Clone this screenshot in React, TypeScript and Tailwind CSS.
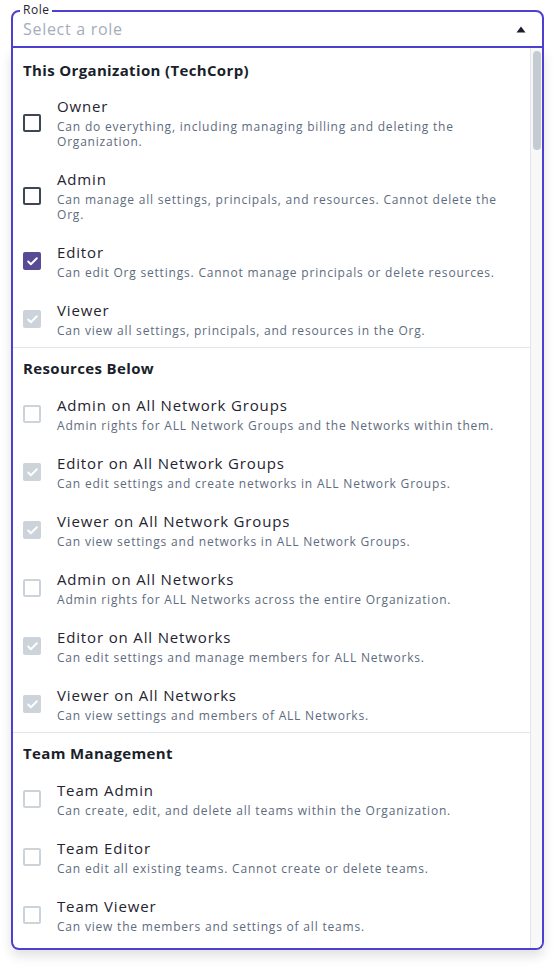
import { Check } from "lucide-react";

type Role = {
    label: string;
    desc: string;
    state: 'off' | 'on' | 'lockedOn' | 'lockedOff';
};

const sections: { title: string; roles: Role[] }[] = [
    {
        title: 'This Organization (TechCorp)',
        roles: [
            { label: 'Owner', desc: 'Can do everything, including managing billing and deleting the Organization.', state: 'off' },
            { label: 'Admin', desc: 'Can manage all settings, principals, and resources. Cannot delete the Org.', state: 'off' },
            { label: 'Editor', desc: 'Can edit Org settings. Cannot manage principals or delete resources.', state: 'on' },
            { label: 'Viewer', desc: 'Can view all settings, principals, and resources in the Org.', state: 'lockedOn' },
        ],
    },
    {
        title: 'Resources Below',
        roles: [
            { label: 'Admin on All Network Groups', desc: 'Admin rights for ALL Network Groups and the Networks within them.', state: 'lockedOff' },
            { label: 'Editor on All Network Groups', desc: 'Can edit settings and create networks in ALL Network Groups.', state: 'lockedOn' },
            { label: 'Viewer on All Network Groups', desc: 'Can view settings and networks in ALL Network Groups.', state: 'lockedOn' },
            { label: 'Admin on All Networks', desc: 'Admin rights for ALL Networks across the entire Organization.', state: 'lockedOff' },
            { label: 'Editor on All Networks', desc: 'Can edit settings and manage members for ALL Networks.', state: 'lockedOn' },
            { label: 'Viewer on All Networks', desc: 'Can view settings and members of ALL Networks.', state: 'lockedOn' },
        ],
    },
    {
        title: 'Team Management',
        roles: [
            { label: 'Team Admin', desc: 'Can create, edit, and delete all teams within the Organization.', state: 'lockedOff' },
            { label: 'Team Editor', desc: 'Can edit all existing teams. Cannot create or delete teams.', state: 'lockedOff' },
            { label: 'Team Viewer', desc: 'Can view the members and settings of all teams.', state: 'lockedOff' },
        ],
    },
];

function Box({ state }: { state: Role['state'] }) {
    if (state === 'on') {
        return (
            <div className="w-[18px] h-[18px] rounded-[2px] bg-[#584a95] flex items-center justify-center shrink-0">
                <Check size={13} strokeWidth={3.5} className="text-white" />
            </div>
        );
    }
    if (state === 'lockedOn') {
        return (
            <div className="w-[18px] h-[18px] rounded-[2px] bg-[#cdd3da] flex items-center justify-center shrink-0">
                <Check size={13} strokeWidth={3.5} className="text-white" />
            </div>
        );
    }
    return (
        <div
            className={
                state === 'off'
                    ? "w-[18px] h-[18px] rounded-[2px] border-2 border-[#3d4653] shrink-0"
                    : "w-[18px] h-[18px] rounded-[2px] border-2 border-[#cdd3da] shrink-0"
            }
        />
    );
}

export default function App() {
    return (
        <div className="min-h-[967px] bg-white pt-[10px] px-[11px] font-['Open_Sans',sans-serif]">
            {/* Select field */}
            <div className="relative h-[38px] border-2 border-[#4f3fd1] rounded-t-lg flex items-center justify-between pl-[10px] pr-[16px]">
                <span className="absolute top-[-10px] left-[7px] px-[3px] bg-white text-xs leading-4 tracking-[0.5px] text-[#1f2430]">Role</span>
                <span className="text-base tracking-[0.7px] text-[#a3adbb]">Select a role</span>
                <svg width="10" height="7" viewBox="0 0 10 7">
                    <path d="M5 0.5 L9.5 6.5 L0.5 6.5 Z" fill="#1a1f2b" />
                </svg>
            </div>

            {/* Dropdown list */}
            <div className="h-[902px] border-x-2 border-b-2 border-[#4f3fd1] rounded-b-lg shadow-[0_6px_12px_rgba(0,0,0,0.12)] overflow-hidden flex">
                <div className="flex-1 pt-[2px]">
                    {sections.map((section, si) => (
                        <div key={section.title} className={si > 0 ? "border-t border-[#e2e6ec]" : ""}>
                            <div
                                className={
                                    si === 0
                                        ? "pt-[10px] pb-[5px] pl-[10px] text-[15px] leading-5 tracking-[0.35px] font-bold text-[#1a1f2b]"
                                        : "pt-[10px] pb-[6px] pl-[10px] text-[15px] leading-5 tracking-[0.35px] font-bold text-[#1a1f2b]"
                                }
                            >
                                {section.title}
                            </div>
                            {section.roles.map((role) => (
                                <div key={role.label} className="flex items-center gap-4 pl-[10px] pr-[14px] pt-[11px] pb-[9px]">
                                    <Box state={role.state} />
                                    <div className="flex-1">
                                        <div className="text-[15px] leading-5 tracking-[0.85px] text-[#1f2430]">{role.label}</div>
                                        <div className="mt-[3px] text-xs leading-[15px] tracking-[0.8px] text-[#5d6b7e]">{role.desc}</div>
                                    </div>
                                </div>
                            ))}
                        </div>
                    ))}
                </div>

                {/* Scrollbar */}
                <div className="w-[12px] bg-[#f8f8f8] border-l border-[#e3e5e8] pt-[3px] pl-[2px]">
                    <div className="w-[8px] h-[99px] rounded-full bg-[#c5cbd3]" />
                </div>
            </div>
        </div>
    );
}
